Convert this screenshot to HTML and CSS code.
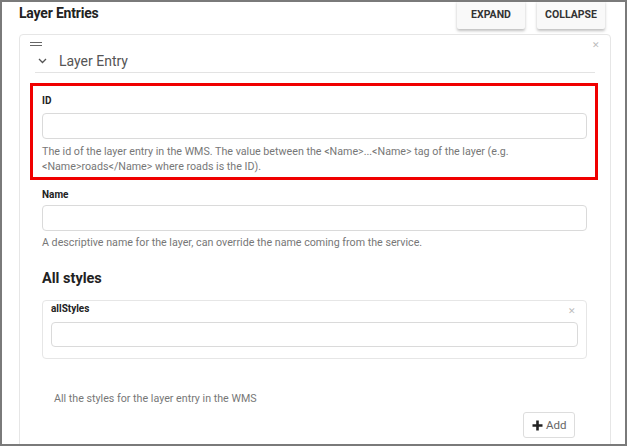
FILE: index.html
```html
<!DOCTYPE html>
<html>
<head>
<meta charset="utf-8">
<link rel="stylesheet" href="styles.css">
</head>
<body>
<div class="frame">
  <div class="topbar">
    <h2 class="title">Layer Entries</h2>
    <div class="actions">
      <button class="raised">EXPAND</button>
      <button class="raised">COLLAPSE</button>
    </div>
  </div>
  <div class="card">
    <div class="card-top">
      <span class="handle"></span>
      <span class="close">&#x2715;</span>
    </div>
    <div class="entry-head">
      <svg class="chev" width="9" height="6" viewBox="0 0 9 6"><path d="M1 1 L4.5 4.5 L8 1" fill="none" stroke="#555" stroke-width="1.3"/></svg>
      <span>Layer Entry</span>
    </div>
    <div class="field highlight">
      <label class="lbl">ID</label>
      <div class="input"></div>
      <p class="help">The id of the layer entry in the WMS. The value between the &lt;Name&gt;...&lt;Name&gt; tag of the layer (e.g. &lt;Name&gt;roads&lt;/Name&gt; where roads is the ID).</p>
    </div>
    <div class="field name-field">
      <label class="lbl">Name</label>
      <div class="input"></div>
      <p class="help">A descriptive name for the layer, can override the name coming from the service.</p>
    </div>
    <h3 class="section">All styles</h3>
    <div class="subbox">
      <div class="subhead">
        <label class="lbl">allStyles</label>
        <span class="close small">&#x2715;</span>
      </div>
      <div class="input"></div>
    </div>
    <p class="help styles-help">All the styles for the layer entry in the WMS</p>
    <div class="add-row">
      <button class="add"><svg width="11" height="11" viewBox="0 0 11 11"><path d="M5.5 0.5 V10.5 M0.5 5.5 H10.5" stroke="#222" stroke-width="2.6"/></svg>Add</button>
    </div>
  </div>
</div>
</body>
</html>
```

FILE: styles.css
```css
html, body { margin: 0; padding: 0; background: #fff; }
body { font-family: Roboto, "Noto Sans", Arial, sans-serif; color: #333; }
.frame {
  width: 627px; height: 446px; box-sizing: border-box;
  border: 2px solid #7a7a7a; overflow: hidden; background: #fff;
}
.topbar { display: flex; justify-content: space-between; align-items: flex-start; padding: 0 20px 0 17px; height: 32px; }
.title { margin: 3px 0 0; font-size: 14px; line-height: 17px; font-weight: 700; color: #222; letter-spacing: -0.2px; }
.actions { display: flex; gap: 12px; margin-top: -2px; }
.raised {
  font-family: Roboto, sans-serif; font-weight: 700; font-size: 10.5px; color: #333;
  background: #f9f9f9; border: none; border-radius: 2px; height: 29px; padding: 0;
  box-shadow: 0 2px 3px rgba(0,0,0,0.25);
  width: 68px;
}
.card {
  margin: 0 14px 0 17px; border: 1px solid #e6e6e6; border-radius: 4px;
  padding: 0 23px 0 22px; height: 430px; box-sizing: border-box;
}
.card-top { display: flex; justify-content: space-between; height: 14px; margin: 0 -13px 0 -12px; }
.handle { width: 12px; height: 2px; border-top: 1.5px solid #666; border-bottom: 1.5px solid #666; margin-top: 6.5px; }
.close { color: #bbb; font-size: 9px; line-height: 10px; margin-top: 5px; }
.entry-head { display: flex; align-items: center; gap: 12px; height: 23px; border-bottom: 1px solid #e3e3e3; margin: 0 -8px 0 -7px; padding-left: 3px; font-size: 14px; color: #555; }
.highlight { border: 3px solid #f00000; margin: 10px -11px 0 -12px; padding: 9px 8px 3px 9px; }
.lbl { display: block; font-size: 10px; line-height: 12px; font-weight: 700; color: #222; }
.input { height: 26px; box-sizing: border-box; border: 1px solid #dadada; border-radius: 4px; margin-top: 6px; }
.help { margin: 5px 0 0; font-size: 10.7px; line-height: 15px; color: #777; }
.name-field { margin-top: 9px; }
.name-field .input { margin-top: 4px; }
.name-field .help { margin-top: 4px; }
.section { margin: 20px 0 0; font-size: 14.5px; line-height: 17px; font-weight: 700; color: #222; }
.subbox { margin-top: 13px; border: 1px solid #e6e6e6; border-radius: 4px; padding: 2px 8px 11px 8px; }
.subhead { display: flex; justify-content: space-between; margin-right: 2px; }
.subbox .input { margin-top: 6px; height: 25px; }
.close.small { font-size: 9px; margin-top: 3px; }
.styles-help { margin: 32px 0 0 12px; }
.add-row { display: flex; justify-content: flex-end; padding-right: 12px; margin-top: 6px; }
.add {
  font-family: Roboto, sans-serif; font-size: 11.5px; color: #666; background: #fff;
  border: 1px solid #ddd; border-radius: 3px; height: 26px; width: 52px; padding: 0 0 0 8px;
  display: flex; align-items: center; gap: 3px;
}
```
